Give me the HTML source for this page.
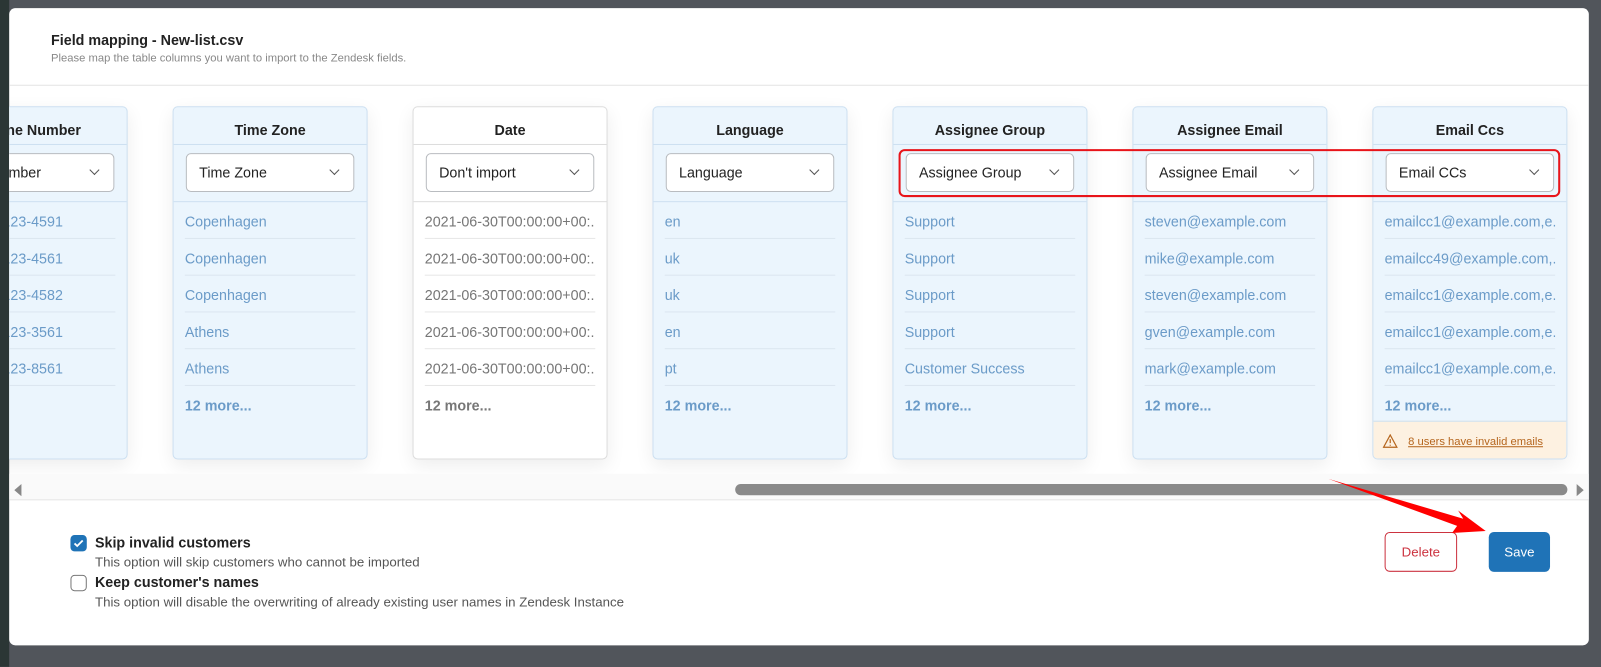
<!DOCTYPE html>
<html><head><style>
*{box-sizing:border-box;margin:0;padding:0}
body{width:1601px;height:653px;background:#51555b;position:relative;overflow:hidden;font-family:"Liberation Sans",sans-serif}
#wrap{position:absolute;left:0;top:0;width:1568px;height:640px;transform:scale(1.0211);transform-origin:0 0}
.strip{position:absolute;left:0;top:0;width:9px;height:653px;background:#2b3635}
.modal{position:absolute;left:9px;top:8px;width:1547px;height:624px;background:#fff;border-radius:6px;overflow:hidden}
.t1{position:absolute;left:41px;top:23px;font-size:14px;font-weight:bold;color:#222}
.t2{position:absolute;left:41px;top:43px;font-size:11px;color:#888}
.hr{position:absolute;left:0;width:100%;height:1px;background:#e4e4e4}
.col{position:absolute;top:96px;width:191px;height:346px;background:#ebf5fd;border:1px solid #cde0f1;border-radius:5px;box-shadow:0 6px 18px rgba(0,0,0,.07);overflow:hidden}
.col.w{background:#fff;border-color:#ddd}
.h{height:36px;text-align:center;line-height:44px;font-size:14px;font-weight:bold;color:#222}
.sa{height:57px;border-top:1px solid #cde0f1;border-bottom:1px solid #cde0f1;position:relative}
.w .sa{border-color:#ddd}
.sel{position:absolute;left:12px;top:8px;width:165px;height:38px;background:#fff;border:1px solid #b9bcc0;border-radius:5px;font-size:14px;color:#222;line-height:36px;padding-left:12px}
.sel:after{content:"";position:absolute;right:15px;top:12px;width:6px;height:6px;border-right:1px solid #555;border-bottom:1px solid #555;transform:rotate(45deg)}
.r{margin:0 11px;height:36px;line-height:38px;border-bottom:1px solid #dbe6f0;font-size:14px;color:#6b9bc8;white-space:nowrap;overflow:hidden}
.w .r{color:#777;border-color:#e6e6e6}
.more{margin:0 11px;line-height:38px;font-size:14px;font-weight:bold;color:#6b9bc8}
.w .more{color:#777}
.warn{position:absolute;left:0;bottom:0;width:100%;height:37px;background:#fdf1e1;border-top:1px solid #cde0f1;font-size:11px;color:#b5651d;line-height:40px;padding-left:34px}
.warn u{text-decoration:underline}
</style></head><body>
<div id="wrap">
<div class="strip"></div>
<div class="modal">
<div class="t1">Field mapping - New-list.csv</div>
<div class="t2">Please map the table columns you want to import to the Zendesk fields.</div>
<div class="hr" style="top:75px"></div>

<div class="col" style="left:-75px"><div class="h">Phone Number</div><div class="sa"><div class="sel" style="left:-20px;width:197px;padding-left:30px">Phone Number</div></div>
<div class="r">+1 (555) 123-4591</div><div class="r">+1 (555) 123-4561</div><div class="r">+1 (555) 123-4582</div><div class="r">+1 (555) 123-3561</div><div class="r">+1 (555) 123-8561</div></div>

<div class="col" style="left:160px"><div class="h">Time Zone</div><div class="sa"><div class="sel">Time Zone</div></div>
<div class="r">Copenhagen</div><div class="r">Copenhagen</div><div class="r">Copenhagen</div><div class="r">Athens</div><div class="r">Athens</div><div class="more">12 more...</div></div>

<div class="col w" style="left:395px"><div class="h">Date</div><div class="sa"><div class="sel">Don't import</div></div>
<div class="r">2021-06-30T00:00:00+00:...</div><div class="r">2021-06-30T00:00:00+00:...</div><div class="r">2021-06-30T00:00:00+00:...</div><div class="r">2021-06-30T00:00:00+00:...</div><div class="r">2021-06-30T00:00:00+00:...</div><div class="more">12 more...</div></div>

<div class="col" style="left:630px"><div class="h">Language</div><div class="sa"><div class="sel">Language</div></div>
<div class="r">en</div><div class="r">uk</div><div class="r">uk</div><div class="r">en</div><div class="r">pt</div><div class="more">12 more...</div></div>

<div class="col" style="left:865px"><div class="h">Assignee Group</div><div class="sa"><div class="sel">Assignee Group</div></div>
<div class="r">Support</div><div class="r">Support</div><div class="r">Support</div><div class="r">Support</div><div class="r">Customer Success</div><div class="more">12 more...</div></div>

<div class="col" style="left:1100px"><div class="h">Assignee Email</div><div class="sa"><div class="sel">Assignee Email</div></div>
<div class="r">steven@example.com</div><div class="r">mike@example.com</div><div class="r">steven@example.com</div><div class="r">gven@example.com</div><div class="r">mark@example.com</div><div class="more">12 more...</div></div>

<div class="col" style="left:1335px"><div class="h">Email Ccs</div><div class="sa"><div class="sel">Email CCs</div></div>
<div class="r">emailcc1@example.com,e...</div><div class="r">emailcc49@example.com,...</div><div class="r">emailcc1@example.com,e...</div><div class="r">emailcc1@example.com,e...</div><div class="r">emailcc1@example.com,e...</div><div class="more">12 more...</div>
<div class="warn"><svg style="position:absolute;left:9px;top:12px" width="15" height="14" viewBox="0 0 15 14"><path d="M7.5 1L14 13H1Z" fill="none" stroke="#b5651d" stroke-width="1.2"/><path d="M7.5 5v4M7.5 10.5v1" stroke="#b5651d" stroke-width="1.2"/></svg><u>8 users have invalid emails</u></div></div>

<div style="position:absolute;left:0;top:456px;width:100%;height:25px;background:#fafafa"></div>
<svg style="position:absolute;left:5px;top:466px" width="8" height="12"><path d="M7 0V12L0 6Z" fill="#888"/></svg>
<div style="position:absolute;left:711px;top:466px;width:815px;height:11px;border-radius:6px;background:#8a8a8a"></div>
<svg style="position:absolute;left:1535px;top:466px" width="8" height="12"><path d="M0 0V12L7 6Z" fill="#888"/></svg>
<div class="hr" style="top:481px"></div>

<div style="position:absolute;left:60px;top:516px;width:16px;height:16px;border-radius:4px;background:#1f73b7"><svg width="16" height="16"><path d="M4 8.2l2.6 2.5L12 5.3" fill="none" stroke="#fff" stroke-width="1.8"/></svg></div>
<div style="position:absolute;left:84px;top:515px;font-size:14px;font-weight:bold;color:#222">Skip invalid customers</div>
<div style="position:absolute;left:84px;top:535px;font-size:13px;color:#555">This option will skip customers who cannot be imported</div>
<div style="position:absolute;left:60px;top:555px;width:16px;height:16px;border-radius:4px;border:1px solid #777;background:#fff"></div>
<div style="position:absolute;left:84px;top:554px;font-size:14px;font-weight:bold;color:#222">Keep customer's names</div>
<div style="position:absolute;left:84px;top:574px;font-size:13px;color:#555">This option will disable the overwriting of already existing user names in Zendesk Instance</div>

<div style="position:absolute;left:1347px;top:513px;width:71px;height:39px;border:1px solid #cc3340;border-radius:5px;color:#cc3340;font-size:13px;text-align:center;line-height:37px">Delete</div>
<div style="position:absolute;left:1449px;top:513px;width:60px;height:39px;background:#1f73b7;border-radius:5px;color:#fff;font-size:13px;text-align:center;line-height:39px">Save</div>
</div>

<div style="position:absolute;left:880px;top:146px;width:648px;height:47px;border:2px solid #e8141a;border-radius:6px"></div>
<svg style="position:absolute;left:0;top:0" width="1568" height="640"><path d="M1301 469L1433 508L1428 500L1455 520L1422 522L1427 515Z" fill="#f00"/></svg>
</div>
</body></html>
